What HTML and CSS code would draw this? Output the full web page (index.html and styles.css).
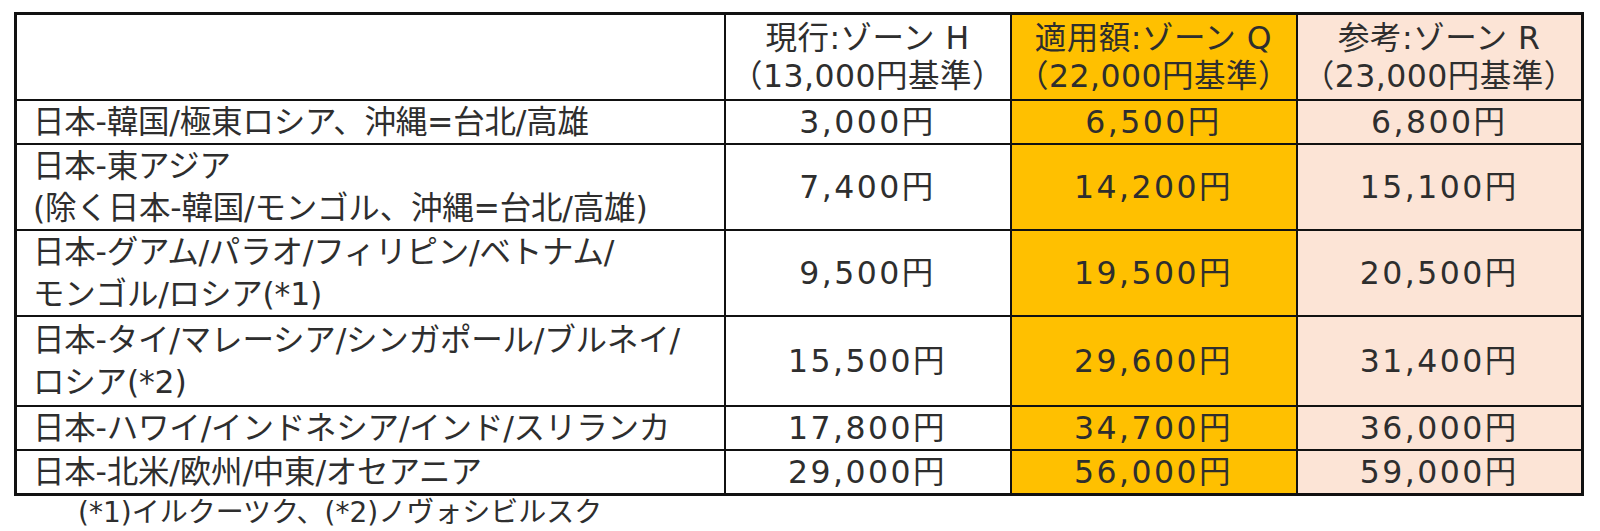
FILE: index.html
```html
<!DOCTYPE html>
<html lang="ja">
<head>
<meta charset="utf-8">
<title>ゾーン運賃</title>
<link rel="stylesheet" href="styles.css">
</head>
<body>
<div class="wrap">
  <table class="fare">
    <colgroup>
      <col class="c-route">
      <col class="c-num">
      <col class="c-num">
      <col class="c-num">
    </colgroup>
    <thead>
      <tr class="r-head">
        <th class="blank"></th>
        <th class="cur">現行:ゾーン H<br>（13,000円基準）</th>
        <th class="app">適用額:ゾーン Q<br>（22,000円基準）</th>
        <th class="ref">参考:ゾーン R<br>（23,000円基準）</th>
      </tr>
    </thead>
    <tbody>
      <tr class="r1">
        <td class="route">日本-韓国/極東ロシア、沖縄=台北/高雄</td>
        <td class="cur">3,000円</td>
        <td class="app">6,500円</td>
        <td class="ref">6,800円</td>
      </tr>
      <tr class="r2">
        <td class="route">日本-東アジア<br>(除く日本-韓国/モンゴル、沖縄=台北/高雄)</td>
        <td class="cur">7,400円</td>
        <td class="app">14,200円</td>
        <td class="ref">15,100円</td>
      </tr>
      <tr class="r3">
        <td class="route">日本-グアム/パラオ/フィリピン/ベトナム/<br>モンゴル/ロシア(*1)</td>
        <td class="cur">9,500円</td>
        <td class="app">19,500円</td>
        <td class="ref">20,500円</td>
      </tr>
      <tr class="r4">
        <td class="route">日本-タイ/マレーシア/シンガポール/ブルネイ/<br>ロシア(*2)</td>
        <td class="cur">15,500円</td>
        <td class="app">29,600円</td>
        <td class="ref">31,400円</td>
      </tr>
      <tr class="r5">
        <td class="route">日本-ハワイ/インドネシア/インド/スリランカ</td>
        <td class="cur">17,800円</td>
        <td class="app">34,700円</td>
        <td class="ref">36,000円</td>
      </tr>
      <tr class="r6">
        <td class="route">日本-北米/欧州/中東/オセアニア</td>
        <td class="cur">29,000円</td>
        <td class="app">56,000円</td>
        <td class="ref">59,000円</td>
      </tr>
    </tbody>
  </table>
  <p class="note">(*1)イルクーツク、(*2)ノヴォシビルスク</p>
</div>
</body>
</html>
```

FILE: styles.css
```css
html, body {
  margin: 0;
  padding: 0;
  background: #ffffff;
}

body {
  font-family: "DejaVu Sans", "Noto Sans CJK JP", sans-serif;
  color: #2e2e2e;
}

.wrap {
  padding: 12px 0 0 14px;
}

.fare {
  border-collapse: collapse;
  table-layout: fixed;
  width: 1569px;
  border: 3px solid #111;
}

.c-route { width: 709px; }
.c-num { width: 286px; }

.fare th,
.fare td {
  border: 2px solid #111;
  padding: 0;
  font-size: 31.5px;
  font-weight: normal;
  line-height: 42px;
  vertical-align: middle;
}

.fare th {
  line-height: 38px;
  text-align: center;
  letter-spacing: 0.5px;
}

.fare td {
  text-align: center;
  letter-spacing: 2.5px;
}

.fare td.route {
  text-align: left;
  padding-left: 16px;
  white-space: nowrap;
  letter-spacing: -0.2px;
}

.cur { background: #ffffff; }
.app { background: #ffc000; }
.ref { background: #fce4d6; }

.r-head { height: 86px; }
.r1 { height: 44px; }
.r2 { height: 86px; }
.r3 { height: 84px; }
.r4 { height: 90px; }
.r5 { height: 44px; }
.r6 { height: 43px; }

.note {
  margin: 0;
  padding: 0 0 0 64px;
  font-size: 28px;
  line-height: 34px;
}
```
